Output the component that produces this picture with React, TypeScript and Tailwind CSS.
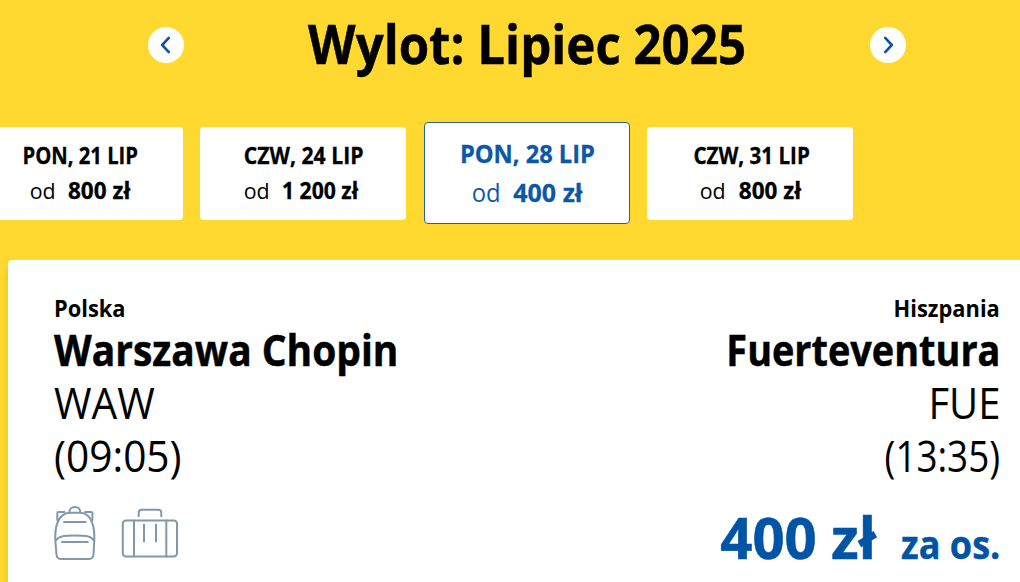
import clsx from 'clsx'

interface Departure {
  date: string
  price: string
  dateFit: string
  priceFit?: string
  selected?: boolean
}

const DEPARTURES: Departure[] = [
  { date: 'PON, 21 LIP', price: '800 zł', dateFit: 'scale-x-[0.9]' },
  { date: 'CZW, 24 LIP', price: '1 200 zł', dateFit: 'scale-x-[0.94]', priceFit: 'origin-left scale-x-[0.94]' },
  { date: 'PON, 28 LIP', price: '400 zł', dateFit: 'scale-x-[0.945]', selected: true },
  { date: 'CZW, 31 LIP', price: '800 zł', dateFit: 'scale-x-[0.915]' },
]

function ArrowButton({ direction }: { direction: 'prev' | 'next' }) {
  return (
    <button className="flex size-9 shrink-0 items-center justify-center rounded-full bg-white text-[#0f54a0]">
      <svg
        className={clsx('size-9', direction === 'next' && '-scale-x-100')}
        viewBox="0 0 36 36"
        fill="none"
        stroke="currentColor"
        strokeWidth="2.6"
        strokeLinecap="round"
        strokeLinejoin="round"
      >
        <path d="M20.8 10.9 14.2 18l6.6 7.1" />
      </svg>
    </button>
  )
}

function DateCard({ date, price, dateFit, priceFit, selected }: Departure) {
  return (
    <button
      className={clsx(
        'flex w-[206px] shrink-0 flex-col items-center rounded pl-[2px]',
        selected
          ? 'h-[102px] border border-[#2b6585] bg-white pt-[11px] text-[25px] leading-[38.5px] text-[#0b57a8]'
          : 'h-[93px] bg-white pt-[11px] text-[22.5px] leading-[35px]',
      )}
    >
      <span className={clsx('font-bold [-webkit-text-stroke:0.3px]', dateFit)}>{date}</span>
      <span className="flex gap-[12px] pr-[2px]">
        <span className="scale-x-[0.95]">od</span>
        <span className={clsx('font-bold [-webkit-text-stroke:0.3px]', priceFit)}>{price}</span>
      </span>
    </button>
  )
}

function Origin() {
  return (
    <div className="flex flex-col items-start text-[43px] leading-[53px]">
      <span className="origin-left scale-x-[0.95] text-[23px] leading-[29px] font-bold">Polska</span>
      <span className="origin-left scale-x-[0.906] font-bold [-webkit-text-stroke:0.5px]">Warszawa Chopin</span>
      <span className="origin-left scale-x-[0.945]">WAW</span>
      <span className="origin-left scale-x-[0.945]">(09:05)</span>
    </div>
  )
}

function Destination() {
  return (
    <div className="flex flex-col items-end text-[43px] leading-[53px]">
      <span className="origin-right scale-x-[0.95] text-[23px] leading-[29px] font-bold">Hiszpania</span>
      <span className="origin-right scale-x-[0.88] font-bold [-webkit-text-stroke:0.5px]">Fuerteventura</span>
      <span className="origin-right scale-x-[0.93]">FUE</span>
      <span className="origin-right scale-x-[0.855]">(13:35)</span>
    </div>
  )
}

function BackpackIcon() {
  return (
    <svg className="h-[58px] w-[46px]" viewBox="0 0 46 58" fill="none" stroke="currentColor" strokeWidth="2" strokeLinecap="round" strokeLinejoin="round">
      <path d="M3.3 36V32C3.3 18 9 8.8 18 8.8H28C37 8.8 42.3 18 42.3 32V36L41.5 50.5Q41.2 55 37 55H9Q4.8 55 4.5 50.5Z" />
      <path d="M17.3 8.5C17.3 1 28.3 1 28.3 8.5" />
      <path d="M5.3 16V8.9Q5.3 7.9 6.3 7.9H12.5M33.2 7.9H39.4Q40.4 7.9 40.4 8.9V16" />
      <path d="M12 18H33.7M10 38H35.7" />
      <path d="M4 36C8 31.5 14 31.5 23 31.5S38 31.5 41.8 36" />
    </svg>
  )
}

function SuitcaseIcon() {
  return (
    <svg className="h-[50px] w-[58px]" viewBox="0 0 58 50" fill="none" stroke="currentColor" strokeWidth="2" strokeLinecap="round" strokeLinejoin="round">
      <rect x="1.8" y="12.4" width="54.2" height="36" rx="3.2" />
      <path d="M17.7 8.2V4.7Q17.7 1.8 20.7 1.8H37.3Q40.3 1.8 40.3 4.7V8.2" />
      <path d="M13 12.4V48.4M45.3 12.4V48.4M23 16.7V33.5M35 16.7V33.5" />
    </svg>
  )
}

export default function App() {
  return (
    <div className="flex h-[582px] w-full flex-col overflow-hidden bg-[#ffd930] font-['Open_Sans','Noto_Sans',sans-serif] text-black">
      <header className="flex h-[90px] items-center justify-between pr-[114px] pl-[148px]">
        <ArrowButton direction="prev" />
        <h1 className="-mt-0.5 scale-x-[0.92] text-[53.5px] leading-[60px] font-bold whitespace-nowrap [-webkit-text-stroke:0.5px]">
          Wylot: Lipiec 2025
        </h1>
        <ArrowButton direction="next" />
      </header>

      <div className="mt-8 -ml-[23.5px] flex h-[102px] items-center gap-[17.6px]">
        {DEPARTURES.map(d => (
          <DateCard key={d.date} {...d} />
        ))}
      </div>

      <main className="mt-9 ml-2 flex-1 rounded-tl bg-white pt-[34px] pr-5 pl-[45.5px] shadow-[0_6px_8px_rgba(150,110,0,0.25)]">
        <div className="flex justify-between">
          <Origin />
          <Destination />
        </div>

        <div className="mt-[22px] flex items-start justify-between">
          <div className="-ml-[1.5px] flex items-end gap-[23px] text-[#8198ac]">
            <BackpackIcon />
            <div className="mb-1">
              <SuitcaseIcon />
            </div>
          </div>
          <p className="mt-0.5 flex items-baseline gap-[17px] font-bold text-[#0054a6]">
            <span className="origin-right scale-x-[0.985] text-[57px] leading-[62px] [-webkit-text-stroke:0.6px]">400 zł</span>
            <span className="origin-right scale-x-[0.925] text-[39px] leading-none [-webkit-text-stroke:0.4px]">za os.</span>
          </p>
        </div>
      </main>
    </div>
  )
}
